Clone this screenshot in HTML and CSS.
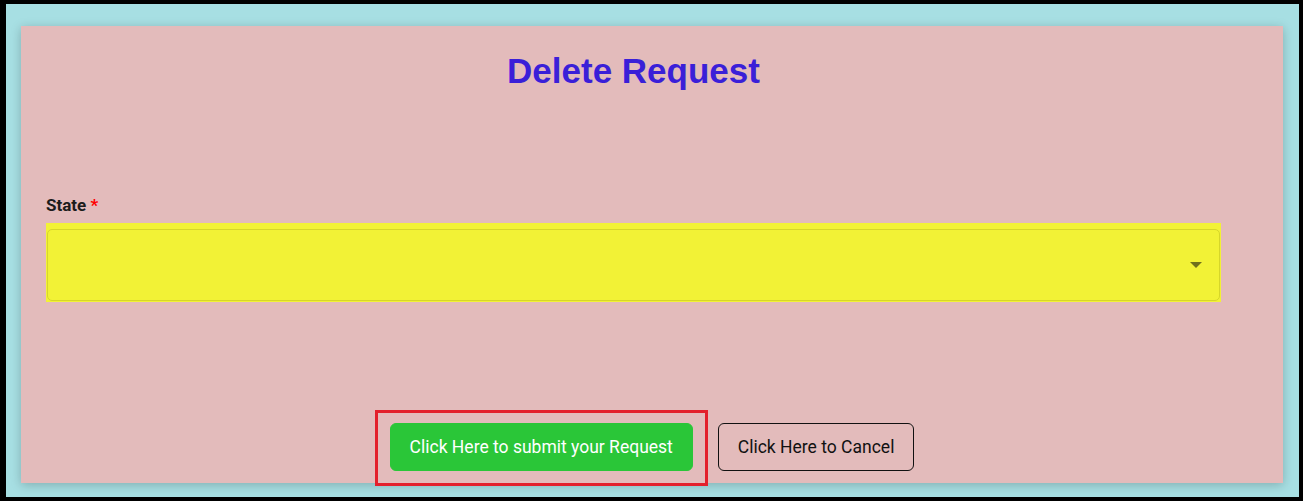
FILE: index.html
```
<!DOCTYPE html>
<html lang="en">
<head>
    <meta charset="UTF-8">
    <meta name="viewport" content="width=device-width, initial-scale=1.0">
    <title>Delete Request</title>
    <link rel="stylesheet" href="styles.css">
</head>
<body>

<div class="frame">
    <div class="card">
        <div class="form-area">
            <h2 class="title">Delete Request</h2>

            <label class="field-label" for="state">State <span class="req">*</span></label>
            <div class="select-wrap">
                <div class="select" id="state">
                    <span class="arrow"></span>
                </div>
            </div>
        </div>

        <div class="actions">
            <button class="btn btn-submit">Click Here to submit your Request</button>
            <button class="btn btn-cancel">Click Here to Cancel</button>
        </div>
    </div>
</div>

</body>
</html>
```

FILE: styles.css
```
html, body {
    margin: 0;
    height: 501px;
}
body {
    font-family: Roboto, "Liberation Sans", Arial, sans-serif;
}
.frame {
    box-sizing: border-box;
    height: 501px;
    border-style: solid;
    border-color: #000;
    border-width: 4px 4px 4px 6px;
    background: #a7dfe3;
    padding: 22px 16px 14px 15px;
    display: flex;
}
.card {
    flex: 1;
    display: flex;
    flex-direction: column;
    background: #e3bbbb;
    box-shadow: 0 2px 10px rgba(0,0,0,0.22);
}
.form-area {
    margin: 0 62px 0 25px;
}
.title {
    margin: 0;
    padding-top: 25px;
    font-family: "Liberation Sans", Arial, sans-serif;
    font-size: 35px;
    line-height: 40px;
    font-weight: bold;
    color: #3a1fd8;
    text-align: center;
}
.field-label {
    display: block;
    margin-top: 104px;
    font-size: 17px;
    line-height: 20px;
    font-weight: bold;
    color: #1c1c1c;
}
.req {
    color: #f00;
}
.select-wrap {
    margin-top: 8px;
    background: #f2f236;
    padding: 6px 1px 1px;
}
.select {
    box-sizing: border-box;
    height: 72px;
    border: 1px solid #d6d62a;
    border-radius: 5px;
    display: flex;
    align-items: center;
    justify-content: flex-end;
    padding-right: 17px;
}
.arrow {
    width: 0;
    height: 0;
    border-left: 6px solid transparent;
    border-right: 6px solid transparent;
    border-top: 6px solid #6f6f1c;
}
.actions {
    margin-top: auto;
    margin-bottom: 12px;
    display: flex;
    justify-content: center;
    gap: 25px;
}
.btn {
    box-sizing: border-box;
    height: 48px;
    padding: 0 19px;
    border-radius: 6px;
    font-family: Roboto, "Liberation Sans", Arial, sans-serif;
    font-size: 17.5px;
}
.btn-submit {
    position: relative;
    background: #2ac638;
    color: #fff;
    border: 1px solid #2ac638;
}
.btn-submit::after {
    content: "";
    position: absolute;
    top: -14px;
    bottom: -16px;
    left: -16px;
    right: -16px;
    border: 3px solid #e3202c;
}
.btn-cancel {
    background: transparent;
    color: #111;
    border: 1px solid #111;
}
```
